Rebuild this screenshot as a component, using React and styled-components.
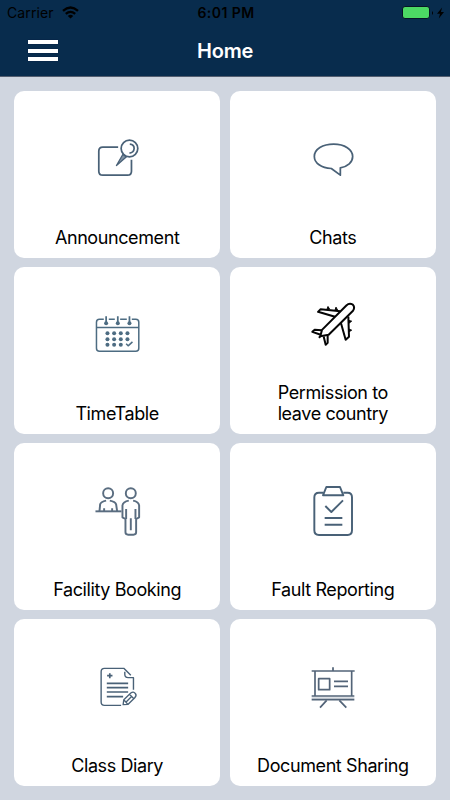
import React from 'react';
import styled, { createGlobalStyle } from 'styled-components';

const AnnouncementIcon = () => (
  <Icon viewBox="-8.4 -2.5 210 210">
    <path d="M100 67H54Q42 67 42 79V139Q42 151 54 151H128Q140 151 140 139V105" />
    <circle cx="134" cy="71" r="25" />
    <path d="M135 58Q148 59 148 71Q147 83 134 85" />
    <path d="M114 89L95 122L125 96Z" fill="#8495a6" strokeWidth="4" />
  </Icon>
);

const ChatIcon = () => (
  <Icon viewBox="-6 -2.5 210 210">
    <path d="M94 131C64 129 43 115 43 95C43 73 68 58 101 58C134 58 158 74 158 95C158 112 143 125 121 129V151Z" />
  </Icon>
);

const calendarDots = [
  [68, 100], [88, 100], [108, 100], [128, 100],
  [68, 118], [88, 118], [108, 118], [128, 118],
  [68, 135], [88, 135], [108, 135],
];

const TimetableIcon = () => (
  <Icon viewBox="-8.4 0.5 210 210" color="#4d6c82">
    <path d="M57 58H44Q35 58 35 67V145Q35 154 44 154H153Q162 154 162 145V67Q162 58 153 58H141M72 58H90M106 58H126" strokeWidth="4.5" />
    <path d="M35 83H162" strokeWidth="4" />
    <path d="M64 49V70M99 49V70M134 49V70" />
    <g fill="currentColor" stroke="none">
      <circle cx="64" cy="70" r="6" />
      <circle cx="99" cy="70" r="6" />
      <circle cx="134" cy="70" r="6" />
      {calendarDots.map(([x, y]) => (
        <circle key={`${x}-${y}`} cx={x} cy={y} r="6" />
      ))}
    </g>
    <path d="M124 132L130 138L143 126" strokeWidth="4.5" />
  </Icon>
);

const PlaneIcon = () => (
  <Icon viewBox="-6 -1.5 210 210" color="#050505" weight={6}>
    <path d="M61 137L66 118L139 45Q148 36 158 42Q166 50 159 61L86 133Z" />
    <path d="M121 62L62 56L54 64L105 79" />
    <path d="M81 56L84 48L89 56M105 59L108 50L113 59" fill="currentColor" strokeWidth="3" />
    <path d="M123 98L137 148L147 139L145 78" />
    <path d="M147 98L155 92L147 90M147 124L155 119L147 116" fill="currentColor" strokeWidth="3" />
    <path d="M65 119L44 118L37 124L60 132" />
    <path d="M71 138L77 163L83 157V135" />
    <path d="M61 137L57 142" />
  </Icon>
);

const FacilityIcon = () => (
  <Icon viewBox="-8.4 3 210 210" color="#5a6d80" weight={5.8}>
    <circle cx="70" cy="55" r="15" />
    <circle cx="138" cy="55" r="15" />
    <path d="M32 109H110" />
    <path d="M44 109L46 88Q48 80 64 77M75 77Q91 80 94 88L97 109M58 100V109M82 100V109" />
    <path d="M132 77Q115 80 113 91V127L122 132V172Q122 179 130 179H146Q154 179 154 172V132L163 127V91Q161 80 145 77" />
    <path d="M124 102V132M152 102V132M138 130V166" />
  </Icon>
);

const FaultIcon = () => (
  <Icon viewBox="-6 3 210 210" weight={5.8}>
    <path d="M70 53H57Q43 53 43 67V166Q43 180 57 180H143Q156 180 156 166V67Q156 53 143 53H130" />
    <path d="M69 61L79 36H120L130 61Z" />
    <path d="M76 93L94 111L129 76M74 129H127M74 149H127" />
  </Icon>
);

const DiaryIcon = () => (
  <Icon viewBox="-8.4 -9 210 210">
    <path d="M109 151H59Q49 151 49 141V50Q49 40 59 40H117L138 61M120 50V58Q120 68 130 68H146V104" strokeWidth="4.2" />
    <path d="M75 55V70M67 62H83" strokeWidth="5" />
    <path d="M66 85H130M66 98H130M66 111H130M66 125H115" />
    <path d="M115 149L117 134L138 114Q146 108 151 115Q157 121 150 128L130 148ZM134 118L147 131M117 134L129 148M124 141L141 124" strokeWidth="4" />
  </Icon>
);

const SharingIcon = () => (
  <Icon viewBox="-6 -9 210 210" color="#536478">
    <rect x="35" y="125" width="128" height="8" fill="#dde1e6" stroke="none" />
    <path d="M99 37V48M35 48H164M35 123H163M35 134H163" />
    <path d="M45 48V123M155 48V123" strokeWidth="5" />
    <rect x="56" y="71" width="33" height="33" />
    <path d="M102 79H144M102 94H144M80 136L60 158M118 136L139 158" />
  </Icon>
);

const menuItems = [
  { id: 1, title: 'Announcement', icon: AnnouncementIcon },
  { id: 2, title: 'Chats', icon: ChatIcon },
  { id: 3, title: 'TimeTable', icon: TimetableIcon },
  { id: 4, title: 'Permission to leave country', icon: PlaneIcon },
  { id: 5, title: 'Facility Booking', icon: FacilityIcon },
  { id: 6, title: 'Fault Reporting', icon: FaultIcon },
  { id: 7, title: 'Class Diary', icon: DiaryIcon },
  { id: 8, title: 'Document Sharing', icon: SharingIcon },
];

const App = () => {
  return (
    <Screen>
      <GlobalStyle />
      <Header>
        {/* Status bar */}
        <StatusBar>
          <Carrier>
            Carrier
            <svg width="17" height="13" viewBox="0 0 17 13" fill="none" stroke="#000" strokeWidth="2.3">
              <path d="M1 4.8Q8.5 -1.8 16 4.8M3.8 7.9Q8.5 3.8 13.2 7.9" />
              <path d="M5.8 9.9Q8.5 7.5 11.2 9.9L8.5 12.6Z" fill="#000" stroke="none" />
            </svg>
          </Carrier>
          <Clock>6:01 PM</Clock>
          <Battery>
            <BatteryLevel />
            <svg width="14" height="12" viewBox="0 0 14 12" fill="#000">
              <path d="M1 4Q3 6 1 8Z" />
              <path d="M11.1 .5L6 6.8H9L7.8 11.4L13 5H9.9Z" />
            </svg>
          </Battery>
        </StatusBar>

        <NavBar>
          <MenuButton aria-label="Menu">
            <MenuLine />
            <MenuLine />
            <MenuLine />
          </MenuButton>
          <Title>Home</Title>
        </NavBar>
      </Header>

      <Grid>
        {menuItems.map(({ id, title, icon: ItemIcon }) => (
          <Card key={id}>
            <IconArea>
              <ItemIcon />
            </IconArea>
            <Label>{title}</Label>
          </Card>
        ))}
      </Grid>
    </Screen>
  );
};

// Styled Components
const GlobalStyle = createGlobalStyle`
  * {
    box-sizing: border-box;
  }
  body {
    margin: 0;
    background: #d0d6e0;
  }
`;

const Screen = styled.div`
  width: 450px;
  height: 800px;
  overflow: hidden;
  background: #d0d6e0;
  font-family: Inter, sans-serif;
  color: #000;
`;

const Header = styled.header`
  height: 76.6px;
  background: #082c4d;
  border-bottom: 1px solid #535e70;
`;

const StatusBar = styled.div`
  height: 25px;
  padding: 0 5px 0 7px;
  display: grid;
  grid-template-columns: 1fr auto 1fr;
  align-items: center;
`;

const Carrier = styled.div`
  display: flex;
  align-items: center;
  gap: 8px;
  font-size: 14px;
  line-height: 25px;
  letter-spacing: 0.1px;
`;

const Clock = styled.div`
  font-size: 14px;
  font-weight: 600;
  line-height: 25px;
  letter-spacing: 0.45px;
`;

const Battery = styled.div`
  display: flex;
  align-items: center;
  justify-content: flex-end;
  gap: 1px;
`;

const BatteryLevel = styled.div`
  width: 28px;
  height: 13px;
  background: #4cd964;
  border: 1.5px solid #061426;
  border-radius: 3px;
`;

const NavBar = styled.div`
  height: 51px;
  padding: 0 28px;
  display: grid;
  grid-template-columns: 1fr auto 1fr;
  align-items: center;
`;

const MenuButton = styled.button`
  width: 30px;
  height: 21px;
  padding: 0;
  border: none;
  background: none;
  display: flex;
  flex-direction: column;
  justify-content: space-between;
`;

const MenuLine = styled.span`
  width: 30px;
  height: 4px;
  background: #fff;
  box-shadow: 0 0 1px #02002c;
`;

const Title = styled.h1`
  margin: 0;
  font-size: 20px;
  font-weight: 600;
  line-height: 24px;
  letter-spacing: -0.2px;
  color: #fff;
`;

const Grid = styled.main`
  padding: 14.6px 14.2px;
  display: grid;
  grid-template-columns: 1fr 1fr;
  grid-auto-rows: 166.6px;
  gap: 9.5px 9.8px;
`;

const Card = styled.div`
  padding-bottom: 10px;
  display: flex;
  flex-direction: column;
  align-items: center;
  background: #fff;
  border-radius: 10px;
`;

const IconArea = styled.div`
  flex: 1;
  display: flex;
  align-items: center;
`;

const Icon = styled.svg.attrs({ fill: 'none', stroke: 'currentColor', strokeLinejoin: 'round' })`
  width: 70px;
  height: 70px;
  color: ${props => props.color || '#496177'};
  stroke-width: ${props => props.weight || 5.2};
`;

const Label = styled.p`
  max-width: 160px;
  margin: 0;
  font-size: 18px;
  line-height: 21px;
  letter-spacing: -0.4px;
  text-align: center;
  text-wrap: balance;
`;

export default App;
